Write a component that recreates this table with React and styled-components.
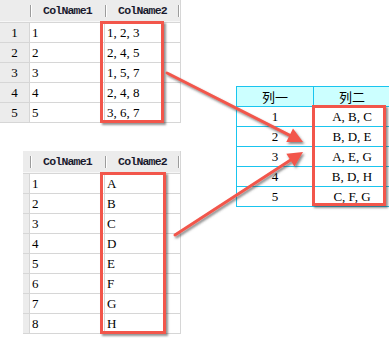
import React from "react";
import styled, { createGlobalStyle } from "styled-components";

const Global = createGlobalStyle`
  html, body { margin: 0; padding: 0; background: #ffffff; }
  #root { width: 389px; height: 338px; }
`;

const Page = styled.div`
  position: relative;
  width: 389px;
  height: 338px;
  overflow: hidden;
  display: grid;
  grid-template-columns: 236px 153px;
  background: #ffffff;
`;

const LeftCol = styled.div`
  display: flex;
  flex-direction: column;
  align-items: flex-start;
  gap: 28px;
`;

const RightCol = styled.div`
  padding-top: 86px;
`;

const Sheet = styled.div`
  position: relative;
  margin-left: ${(p) => p.$offset || 0}px;
  width: ${(p) => p.$width}px;
  background: #ffffff;
  border-right: 1px solid #d6d6d6;
  border-bottom: 1px solid #d6d6d6;
  font-family: "Liberation Serif", serif;
  font-size: 13px;
  color: #000;
`;

const HeadRow = styled.div`
  display: grid;
  grid-template-columns: ${(p) => p.$cols};
  height: 22px;
  background: #ececec;
  border-bottom: 1px solid #f7f7f7;
  box-sizing: border-box;
`;

const HeadCell = styled.div`
  position: relative;
  text-align: center;
  line-height: 22px;
  font-family: "Liberation Mono", monospace;
  font-size: 11.5px;
  font-weight: bold;
  letter-spacing: -0.8px;
  color: #1a1a2e;
  ${(p) =>
    p.$sep &&
    `
    &::before {
      content: "";
      position: absolute;
      left: 0;
      top: 5px;
      bottom: 5px;
      width: 1px;
      background: #9c9c9c;
      box-shadow: 1px 0 0 #ffffff;
    }
  `}
  ${(p) =>
    p.$sepRight &&
    `
    &::after {
      content: "";
      position: absolute;
      right: 1px;
      top: 5px;
      bottom: 5px;
      width: 1px;
      background: #9c9c9c;
      box-shadow: 1px 0 0 #ffffff;
    }
  `}
`;

const Row = styled.div`
  display: grid;
  grid-template-columns: ${(p) => p.$cols};
  height: 20px;
  border-top: 1px solid #d6d6d6;
  box-sizing: border-box;
`;

const NumCell = styled.div`
  background: #ececec;
  text-align: center;
  line-height: 19px;
  border-right: 1px solid #d6d6d6;
`;

const DataCell = styled.div`
  padding-left: 2px;
  line-height: 19px;
  border-right: ${(p) => (p.$last ? "none" : "1px solid #d6d6d6")};
  white-space: nowrap;
`;

const RedBox = styled.div`
  position: absolute;
  left: ${(p) => p.$x}px;
  top: ${(p) => p.$y}px;
  width: ${(p) => p.$w}px;
  height: ${(p) => p.$h}px;
  box-sizing: border-box;
  border: 3px solid #f2564b;
  box-shadow: 2px 2px 2px rgba(60, 60, 60, 0.55);
  pointer-events: none;
`;

const ResultWrap = styled.div`
  position: relative;
  width: 153px;
`;

const ResultTable = styled.table`
  border-collapse: collapse;
  table-layout: fixed;
  width: 153px;
  font-family: "Liberation Serif", serif;
  font-size: 13px;
  color: #000;
`;

const ResultHead = styled.th`
  width: 76px;
  height: 19px;
  padding: 0;
  background: #ccffff;
  border: 1px solid #19c5ef;
  font-family: "Noto Sans CJK SC", sans-serif;
  font-weight: 400;
  font-size: 13px;
  line-height: 19px;
  text-align: center;
`;

const ResultCell = styled.td`
  height: 19px;
  padding: 0;
  border: 1px solid #19c5ef;
  line-height: 19px;
  text-align: center;
`;

const Overlay = styled.svg`
  position: absolute;
  left: 0;
  top: 0;
  width: 389px;
  height: 338px;
  pointer-events: none;
`;

const topRows = [
  ["1", "1", "1, 2, 3"],
  ["2", "2", "2, 4, 5"],
  ["3", "3", "1, 5, 7"],
  ["4", "4", "2, 4, 8"],
  ["5", "5", "3, 6, 7"],
];

const bottomRows = [
  ["1", "A"],
  ["2", "B"],
  ["3", "C"],
  ["4", "D"],
  ["5", "E"],
  ["6", "F"],
  ["7", "G"],
  ["8", "H"],
];

const resultRows = [
  ["1", "A, B, C"],
  ["2", "B, D, E"],
  ["3", "A, E, G"],
  ["4", "B, D, H"],
  ["5", "C, F, G"],
];

function arrowHead(x1, y1, x2, y2, len = 15, half = 7.5) {
  const dx = x2 - x1;
  const dy = y2 - y1;
  const l = Math.hypot(dx, dy);
  const ux = dx / l;
  const uy = dy / l;
  const bx = x2 - ux * len;
  const by = y2 - uy * len;
  const px = -uy * half;
  const py = ux * half;
  return {
    points: `${x2},${y2} ${bx + px},${by + py} ${bx - px},${by - py}`,
    lx: bx + ux * 3,
    ly: by + uy * 3,
  };
}

function Arrow({ x1, y1, x2, y2 }) {
  const h = arrowHead(x1, y1, x2, y2);
  return (
    <g filter="url(#arrowShadow)">
      <line x1={x1} y1={y1} x2={h.lx} y2={h.ly} stroke="#f2564b" strokeWidth="3" strokeLinecap="round" />
      <polygon points={h.points} fill="#f2564b" />
    </g>
  );
}

export default function App() {
  const topCols = "30px 75px 75px";
  const bottomCols = "7px 75px 75px";
  return (
    <>
      <Global />
      <Page>
        <LeftCol>
          <Sheet $width={180}>
            <HeadRow $cols={topCols}>
              <HeadCell />
              <HeadCell $sep>ColName1</HeadCell>
              <HeadCell $sep $sepRight>ColName2</HeadCell>
            </HeadRow>
            {topRows.map((r) => (
              <Row key={r[0]} $cols={topCols}>
                <NumCell>{r[0]}</NumCell>
                <DataCell>{r[1]}</DataCell>
                <DataCell $last>{r[2]}</DataCell>
              </Row>
            ))}
            <RedBox $x={100} $y={21} $w={64} $h={102} />
          </Sheet>
          <Sheet $width={157} $offset={23}>
            <HeadRow $cols={bottomCols}>
              <HeadCell />
              <HeadCell $sep>ColName1</HeadCell>
              <HeadCell $sep $sepRight>ColName2</HeadCell>
            </HeadRow>
            {bottomRows.map((r) => (
              <Row key={r[0]} $cols={bottomCols}>
                <NumCell />
                <DataCell>{r[0]}</DataCell>
                <DataCell $last>{r[1]}</DataCell>
              </Row>
            ))}
            <RedBox $x={77} $y={21} $w={66} $h={162} />
          </Sheet>
        </LeftCol>
        <RightCol>
          <ResultWrap>
            <ResultTable>
              <thead>
                <tr>
                  <ResultHead>列一</ResultHead>
                  <ResultHead>列二</ResultHead>
                </tr>
              </thead>
              <tbody>
                {resultRows.map((r) => (
                  <tr key={r[0]}>
                    <ResultCell>{r[0]}</ResultCell>
                    <ResultCell>{r[1]}</ResultCell>
                  </tr>
                ))}
              </tbody>
            </ResultTable>
            <RedBox $x={76} $y={19} $w={74} $h={101} />
          </ResultWrap>
        </RightCol>
        <Overlay viewBox="0 0 389 338">
          <defs>
            <filter id="arrowShadow" x="-20%" y="-20%" width="140%" height="140%">
              <feDropShadow dx="1.5" dy="2" stdDeviation="1.2" floodColor="#404040" floodOpacity="0.6" />
            </filter>
          </defs>
          <Arrow x1={167} y1={73} x2={303} y2={142} />
          <Arrow x1={175} y1={235} x2={303} y2={152} />
        </Overlay>
      </Page>
    </>
  );
}
